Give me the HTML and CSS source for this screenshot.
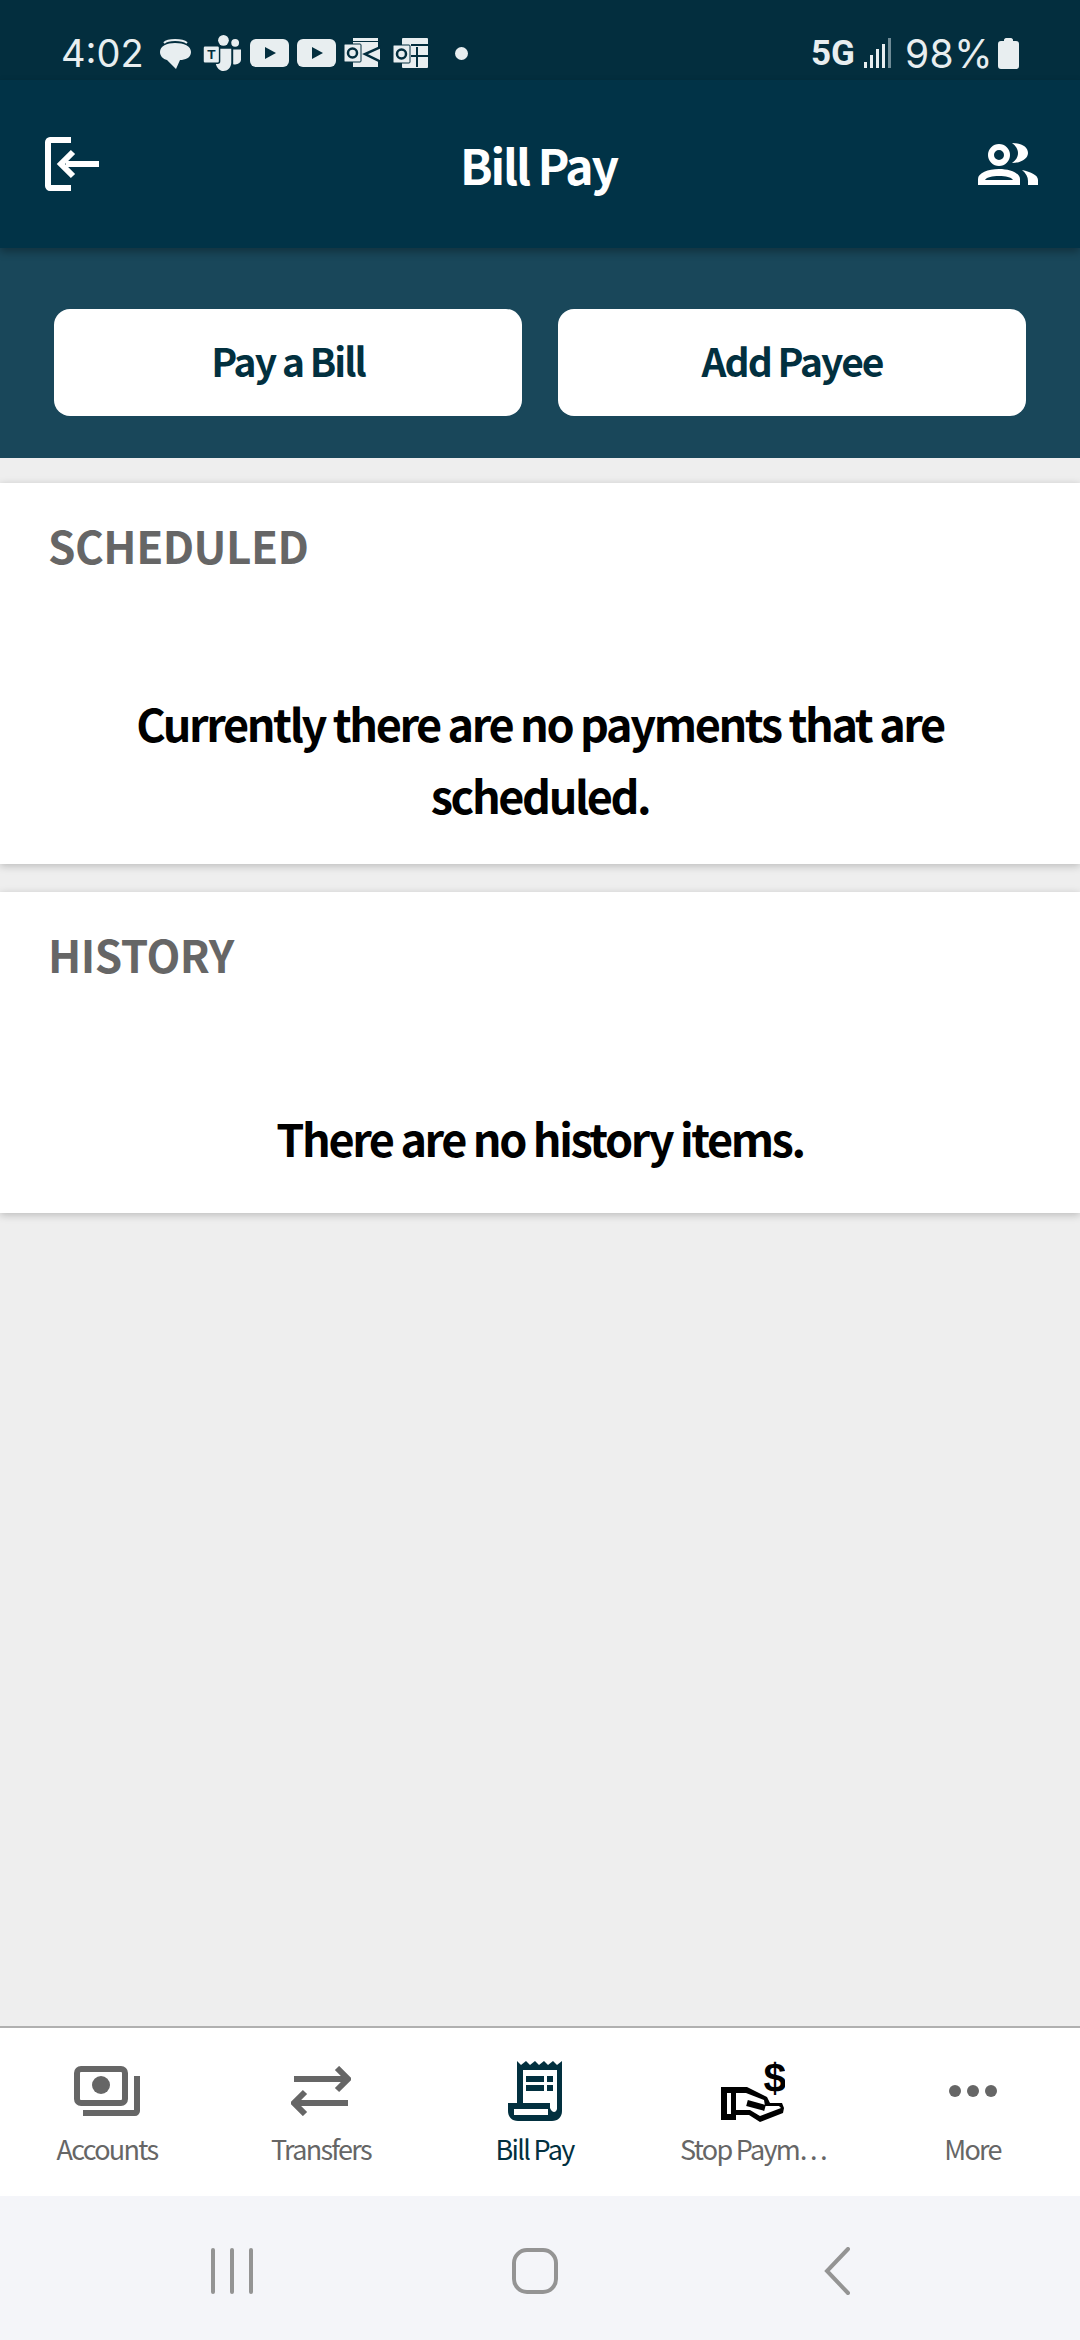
FILE: index.html
```html
<!DOCTYPE html>
<html lang="en">
<head>
  <meta charset="UTF-8" />
  <meta name="viewport" content="width=device-width, initial-scale=1.0" />
  <title>Bill Pay</title>
  <link rel="stylesheet" href="styles.css">
</head>
<body>
  <div class="status-bar">
    <div class="status-left">
      <span class="clock">4:02</span>
      <svg class="st-icon st-bubble" viewBox="0 0 31 31"><path d="M4 5C8 1 22 1 27 5" fill="none" stroke="#e8eef0" stroke-width="2"/><path d="M15 5C24 5 31 8 31 14C31 20 25 22 20 22L16 31L7 22C3 21 0 18 0 14C0 8 7 5 15 5Z" fill="#e8eef0"/></svg>
      <svg class="st-icon st-teams" viewBox="0 0 40 38"><circle cx="21" cy="5.500" r="5.500" fill="#e8eef0"/><circle cx="33" cy="8" r="4" fill="#e8eef0"/><path d="M14 14H29V28C29 34 25 37 21 37C17 37 14 34 13 29Z" fill="#e8eef0"/><path d="M31 15H39V25C39 29 35 31 31 30Z" fill="#e8eef0"/><rect x="0" y="11" width="17" height="18" rx="2" fill="#e8eef0" stroke="#032e3e" stroke-width="1.500"/><text x="8.500" y="25" class="st-letter" text-anchor="middle">T</text></svg>
      <svg class="st-icon st-yt" viewBox="0 0 39 28"><rect width="39" height="28" rx="6" fill="#e8eef0"/><path d="M15 8L26 14L15 20Z" fill="#032e3e"/></svg>
      <svg class="st-icon st-yt" viewBox="0 0 39 28"><rect width="39" height="28" rx="6" fill="#e8eef0"/><path d="M15 8L26 14L15 20Z" fill="#032e3e"/></svg>
      <svg class="st-icon st-office" viewBox="0 0 37 30"><rect x="9" y="0" width="25" height="29" fill="#e8eef0"/><path d="M9 3.500H34" stroke="#032e3e" stroke-width="1"/><rect x="0" y="6" width="17" height="18" rx="1" fill="#e8eef0" stroke="#032e3e" stroke-width="1"/><ellipse cx="8.500" cy="15" rx="4.500" ry="4.500" fill="none" stroke="#032e3e" stroke-width="2.500"/><path d="M22 16L36 9V23Z" fill="#e8eef0"/><path d="M37 9L21 16L37 24" fill="none" stroke="#032e3e" stroke-width="2.500"/></svg>
      <svg class="st-icon st-office" viewBox="0 0 35 30"><rect x="9" y="0" width="26" height="30" rx="1" fill="#e8eef0"/><rect x="0" y="7" width="17" height="18" rx="1" fill="#e8eef0" stroke="#032e3e" stroke-width="1"/><ellipse cx="8.500" cy="16" rx="4.500" ry="4.500" fill="none" stroke="#032e3e" stroke-width="2.500"/><path d="M18 7H35M24 9V29M18 18H35" fill="none" stroke="#032e3e" stroke-width="2"/></svg>
      <span class="st-dot"></span>
    </div>
    <div class="status-right">
      <span class="net">5G</span>
      <svg class="st-signal" viewBox="0 0 27 30"><g fill="#e8eef0"><rect x="0" y="24" width="3" height="6"/><rect x="6" y="17" width="3" height="13"/><rect x="12" y="11" width="3" height="19"/><rect x="18" y="6" width="3" height="24"/></g><rect x="24" y="0" width="3" height="30" fill="#6f8b96"/></svg>
      <span class="batt-text">98%</span>
      <svg class="st-batt" viewBox="0 0 21 31"><path d="M6 2C6 1 7 0 8 0H13C14 0 15 1 15 2V3H18C20 3 21 4 21 6V28C21 30 20 31 18 31H3C1 31 0 30 0 28V6C0 4 1 3 3 3H6Z" fill="#e8eef0"/></svg>
    </div>
  </div>

  <div class="header">
    <svg class="exit-icon" viewBox="0 0 54 54">
      <path d="M26 3H5C4 3 3 4 3 5V49C3 50 4 51 5 51H26" fill="none" stroke="#fff" stroke-width="6"/>
      <path d="M54 27H21" fill="none" stroke="#fff" stroke-width="6"/>
      <path d="M28 15L16 27L28 39" fill="none" stroke="#fff" stroke-width="6"/>
    </svg>
    <h1>Bill Pay</h1>
    <svg class="people-icon" viewBox="0 0 60 42">
      <circle cx="21" cy="12" r="8" fill="none" stroke="#fff" stroke-width="6"/>
      <path d="M34 0C44 0 50 4 50 10C50 15 44 20 34 20C38 17 40 14 40 10C40 6 38 3 34 0Z" fill="#fff"/>
      <path fill-rule="evenodd" d="M0 42V36C0 30 10 26 21 26C32 26 42 30 42 36V42ZM7 37H35C33 34 28 33 21 33C14 33 9 34 7 37Z" fill="#fff"/>
      <path d="M44 27C53 29 60 32 60 37V42H50V38C50 34 48 30 44 27Z" fill="#fff"/>
    </svg>
  </div>

  <div class="toolbar">
    <a href="#" class="tool-btn">Pay a Bill</a>
    <a href="#" class="tool-btn">Add Payee</a>
  </div>

  <div class="content">
    <section class="panel panel-scheduled">
      <h3>SCHEDULED</h3>
      <p>Currently there are no payments that are scheduled.</p>
    </section>
    <section class="panel panel-history">
      <h3>HISTORY</h3>
      <p>There are no history items.</p>
    </section>
  </div>

  <nav class="tabs">
    <a href="#" class="tab">
      <span class="tab-icon">
        <svg width="66" height="50" viewBox="0 0 66 50">
          <rect x="3" y="3" width="48" height="34" rx="4" fill="none" stroke="#666" stroke-width="6"/>
          <circle cx="27" cy="19" r="9" fill="#666"/>
          <path d="M63 10V45C63 46 62 47 61 47H9" fill="none" stroke="#666" stroke-width="6"/>
        </svg>
      </span>
      <span class="tab-label">Accounts</span>
    </a>
    <a href="#" class="tab">
      <span class="tab-icon">
        <svg width="60" height="50" viewBox="0 0 60 50">
          <path d="M3 13H56" fill="none" stroke="#666" stroke-width="6"/>
          <path d="M46 2L57 13L46 24" fill="none" stroke="#666" stroke-width="6"/>
          <path d="M57 37H4" fill="none" stroke="#666" stroke-width="6"/>
          <path d="M14 26L3 37L14 48" fill="none" stroke="#666" stroke-width="6"/>
        </svg>
      </span>
      <span class="tab-label">Transfers</span>
    </a>
    <a href="#" class="tab tab-active">
      <span class="tab-icon">
        <svg width="54" height="60" viewBox="0 0 54 60">
          <path fill-rule="evenodd" fill="#02303f" d="M9 0L13 4L18 0L22 4L27 0L31 4L36 0L40 4L45 0L49 4L54 0V50C54 56 50 60 44 60H10C4 60 0 56 0 50V42H9ZM15 9V42H42V47C44 52 48 52 49 48V9ZM6 48V54H40V48Z"/>
          <path d="M18 15H36V21H18ZM18 24H36V30H18ZM39 15H45V21H39ZM39 24H45V30H39Z" fill="#02303f"/>
        </svg>
      </span>
      <span class="tab-label">Bill Pay</span>
    </a>
    <a href="#" class="tab">
      <span class="tab-icon">
        <svg class="hand-icon" width="64" height="66" viewBox="0 -4 64 66">
          <text x="54" y="32" class="dollar" text-anchor="middle">$</text>
          <path fill-rule="evenodd" fill="#000" d="M0 27H26L46 37L49 43H61L63 48L62 53L39 62L28 55H15V60H0ZM6 33V54H10V33Z"/>
          <path d="M15 33H25L43 40L44 46H58L60 48L39 56L29 50H15Z" fill="#fff"/>
          <path d="M26 43L44 48" fill="none" stroke="#000" stroke-width="6"/>
        </svg>
      </span>
      <span class="tab-label">Stop Paym…</span>
    </a>
    <a href="#" class="tab">
      <span class="tab-icon">
        <svg width="48" height="14" viewBox="0 0 48 14"><circle cx="6" cy="7" r="6" fill="#666"/><circle cx="24" cy="7" r="6" fill="#666"/><circle cx="42" cy="7" r="6" fill="#666"/></svg>
      </span>
      <span class="tab-label">More</span>
    </a>
  </nav>

  <div class="system-nav">
    <svg width="42" height="46" viewBox="0 0 42 46"><path d="M2 2V44M21 2V44M40 2V44" fill="none" stroke="#949494" stroke-width="4" stroke-linecap="round"/></svg>
    <svg width="46" height="46" viewBox="0 0 46 46"><rect x="2" y="2" width="42" height="42" rx="13" fill="none" stroke="#949494" stroke-width="4"/></svg>
    <svg width="26" height="48" viewBox="0 0 26 48"><path d="M24 2L3 24L24 46" fill="none" stroke="#949494" stroke-width="4" stroke-linecap="round"/></svg>
  </div>
</body>
</html>
```

FILE: styles.css
```css
:root {
  --navy: #013347;
  --navy-dark: #032e3e;
  --teal: #19475a;
  --gray-bg: #eeeeee;
  --gray-text: #666666;
  --status-text: #e8eef0;
}
* { box-sizing: border-box; }
html, body { height: 100%; }
body {
  margin: 0;
  font-family: "Noto Sans CJK SC", "Noto Sans", sans-serif;
  background: var(--gray-bg);
  display: flex;
  flex-direction: column;
  height: 2340px;
  overflow: hidden;
}
a { text-decoration: none; }

.status-bar {
  height: 80px;
  flex: none;
  background: var(--navy-dark);
  display: flex;
  align-items: center;
  justify-content: space-between;
  padding: 26px 61px 0 61px;
  color: var(--status-text);
  font-family: Inter, Roboto, sans-serif;
}
.status-left, .status-right { display: flex; align-items: center; }
.clock { font-size: 38px; width: 99px; }
.st-icon { display: block; margin-right: 10px; }
.st-bubble { width: 31px; height: 31px; margin-right: 12px; }
.st-teams { width: 39px; height: 37px; margin-right: 8px; }
.st-yt { width: 39px; height: 28px; margin-right: 8px; }
.st-office { width: 37px; height: 30px; margin-right: 11px; }
.st-letter { font: bold 14px "Liberation Sans", sans-serif; fill: #032e3e; }
.st-dot { width: 13px; height: 13px; border-radius: 50%; background: var(--status-text); margin-left: 15px; }
.net { font-family: Roboto, sans-serif; font-size: 35px; font-weight: 700; }
.st-signal { width: 27px; height: 30px; margin: 0 14px 0 9px; }
.batt-text { font-size: 39px; letter-spacing: 0.5px; margin-right: 5px; }
.st-batt { width: 21px; height: 31px; }

.header {
  height: 168px;
  flex: none;
  background: var(--navy);
  display: flex;
  align-items: center;
  justify-content: space-between;
  padding: 0 42px 0 45px;
  position: relative;
  z-index: 2;
  box-shadow: 0 4px 8px rgba(0, 0, 0, 0.3);
}
.header h1 {
  margin: 0;
  color: #fff;
  font-size: 48px;
  font-weight: 700;
  letter-spacing: -2.2px;
}
.exit-icon { width: 54px; height: 54px; }
.people-icon { width: 60px; height: 42px; }

.toolbar {
  height: 210px;
  flex: none;
  background: var(--teal);
  display: flex;
  gap: 36px;
  padding: 61px 54px 0;
}
.tool-btn {
  flex: 1;
  height: 107px;
  background: #fff;
  border-radius: 16px;
  color: #02303f;
  font-size: 39px;
  font-weight: 700;
  letter-spacing: -2px;
  display: flex;
  align-items: center;
  justify-content: center;
  padding-bottom: 5px;
}

.content {
  flex: 1;
  padding-top: 25px;
  display: flex;
  flex-direction: column;
  gap: 28px;
}
.panel {
  background: #fff;
  box-shadow: 0 2px 8px rgba(0, 0, 0, 0.22);
  text-align: center;
  padding: 0 30px;
}
.panel-scheduled { height: 381px; }
.panel-history { height: 321px; }
.panel h3 {
  margin: 0;
  padding: 34px 0 0 18px;
  text-align: left;
  color: var(--gray-text);
  font-size: 44px;
  line-height: 56px;
  font-weight: 700;
  letter-spacing: -0.5px;
}
.panel p {
  margin: 0;
  padding: 114px 50px 0;
  color: #000;
  font-size: 45px;
  line-height: 72px;
  font-weight: 700;
  letter-spacing: -2.4px;
}
.panel-history p { padding-top: 120px; }

.tabs {
  height: 170px;
  flex: none;
  background: #fff;
  border-top: 2px solid #b0b0b0;
  display: grid;
  grid-template-columns: 214px 214px 213px 224px 215px;
}
.tab {
  display: flex;
  flex-direction: column;
  align-items: center;
  color: var(--gray-text);
}
.tab-active { color: #02303f; }
.tab-icon {
  height: 101px;
  display: flex;
  align-items: center;
  justify-content: center;
  padding-top: 29px;
  padding-bottom: 4px;
}
.hand-icon { margin-bottom: 4px; }
.tab-label {
  font-size: 27px;
  line-height: 40px;
  letter-spacing: -1.7px;
}
.dollar { font: 700 41px "Liberation Sans", sans-serif; fill: #000; }

.system-nav {
  height: 144px;
  flex: none;
  background: #f4f5f9;
  display: grid;
  grid-template-columns: 464px 142px 462px;
  align-items: center;
  justify-items: center;
  padding-top: 5px;
}
```
